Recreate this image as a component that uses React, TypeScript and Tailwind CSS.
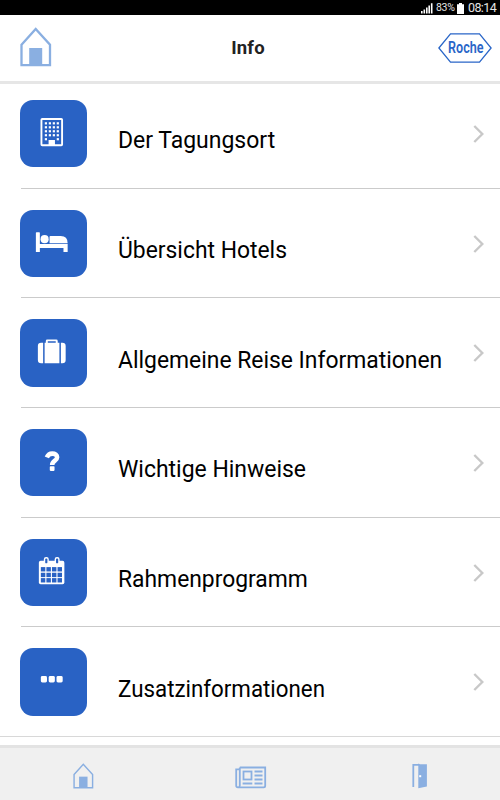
import type { ReactNode } from 'react';

interface MenuItem {
  label: string;
  icon: ReactNode;
  labelClass: string;
}

function BuildingIcon() {
  const columns = [25, 29, 33, 37];
  const rows = [22.4, 26.4, 30.4, 34.4, 38.4];

  return (
    <svg viewBox="0 0 68 68" className="size-full" fill="#fff">
      <rect x="21.6" y="19.2" width="20.8" height="26.4" rx="0.8" fill="none" stroke="#fff" strokeWidth="1.9" />
      {rows.map((y, r) =>
        columns.map((x, c) =>
          r === 4 && (c === 1 || c === 2) ? null : <rect key={`${x}-${y}`} x={x} y={y} width="2.2" height="2.2" />
        )
      )}
      <rect x="28.8" y="40.3" width="6.4" height="5.5" />
    </svg>
  );
}

function BedIcon() {
  return (
    <svg viewBox="0 0 68 68" className="size-full" fill="#fff">
      <path d="M16.7 22.3h2.6a.7.7 0 0 1 .7.7v11.3h28v8h-4.2v-4H20v4h-4V23a.7.7 0 0 1 .7-.7z" />
      <circle cx="24.8" cy="29.4" r="4.1" />
      <path d="M29.8 33.4v-6.5q0-.8.8-.8h10.4q7 0 7 7.3z" />
    </svg>
  );
}

function SuitcaseIcon() {
  return (
    <svg viewBox="0 0 68 68" className="size-full" fill="#fff">
      <path d="M23.3 23.8v20.7h-2a3.3 3.3 0 0 1-3.3-3.3V27.1a3.3 3.3 0 0 1 3.3-3.3z" />
      <path d="M41.2 23.8v20.7h1.5a3.3 3.3 0 0 0 3.3-3.3V27.1a3.3 3.3 0 0 0-3.3-3.3z" />
      <path d="M24.8 23.8H26v-1.7q0-1.5 1.5-1.5h9q1.5 0 1.5 1.5v1.7h1.7v20.7H24.8zM28 23.8h8v-1.4h-8z" />
    </svg>
  );
}

function QuestionIcon() {
  return (
    <svg viewBox="0 0 68 68" className="size-full" fill="none" stroke="#fff" strokeWidth="4.6">
      <path d="M27 28.6q1.7-3.8 5.5-3.8c3 0 4.9 1.5 4.9 3.6 0 3.6-5 3.3-5 7.8" />
      <rect x="30" y="37.6" width="4.8" height="4.6" rx="0.8" fill="#fff" stroke="none" />
    </svg>
  );
}

function CalendarIcon() {
  const columns = [21, 26.6, 32.2, 37.8];
  const rows = [28.3, 34, 39.4];

  return (
    <svg viewBox="0 0 68 68" className="size-full" fill="#fff">
      <rect x="19" y="22" width="25.7" height="23.6" rx="1.8" />
      {rows.map(y => columns.map(x => <rect key={`${x}-${y}`} x={x} y={y} width="4.5" height="4.4" fill="#2962c4" />))}
      <rect x="24.7" y="18.9" width="3.6" height="6.3" rx="1.6" fill="#2962c4" stroke="#fff" strokeWidth="1.4" />
      <rect x="35.6" y="18.9" width="3.6" height="6.3" rx="1.6" fill="#2962c4" stroke="#fff" strokeWidth="1.4" />
    </svg>
  );
}

function DotsIcon() {
  return (
    <svg viewBox="0 0 68 68" className="size-full" fill="#fff">
      <rect x="21" y="28.2" width="6.2" height="6.5" rx="1.5" />
      <rect x="28.9" y="28.2" width="6.2" height="6.5" rx="1.5" />
      <rect x="36.8" y="28.2" width="6.2" height="6.5" rx="1.5" />
    </svg>
  );
}

function HouseIcon({ className, strokeWidth }: { className: string; strokeWidth: number }) {
  return (
    <svg viewBox="0 0 32 40" className={className} fill="none" stroke="#8aafe1" strokeWidth={strokeWidth}>
      <path d="M1.5 17.8 15.7 2 30 17.8V38.2H1.5z" />
      <path d="M9.2 21h13v17h-13z" fill="#8aafe1" stroke="none" />
    </svg>
  );
}

function NewsIcon() {
  return (
    <svg viewBox="0 0 32 23" className="mt-[2px] ml-[3px] h-[23px] w-8" fill="none" stroke="#8aafe1" strokeWidth="1.8">
      <path d="M4.8 1.5h25.4v18.2q0 1.6-1.6 1.6H3q-1.8 0-1.8-1.8V3.3h3.6M4.8 1.5v18q0 1.6-1.6 1.8" />
      <rect x="8.5" y="5.5" width="8" height="8" />
      <path d="M19.5 5.5h8M19.5 9.5h8M19.5 13.5h8M7.6 17.5h9.7M19.5 17.5h8" />
    </svg>
  );
}

function DoorIcon() {
  return (
    <svg viewBox="0 0 16 26" className="ml-[6px] h-[26px] w-4" fill="none" stroke="#8aafe1">
      <path d="M1.3 24V1.8H7" strokeWidth="1.8" />
      <path d="M6.3.5 8 1.2h6.9v22.3L6.3 25.3z" fill="#8aafe1" stroke="none" />
      <rect x="7.2" y="12.2" width="2" height="2" fill="#fff" stroke="none" />
    </svg>
  );
}

const items: MenuItem[] = [
  { label: 'Der Tagungsort', icon: <BuildingIcon />, labelClass: 'scale-x-[0.957]' },
  { label: 'Übersicht Hotels', icon: <BedIcon />, labelClass: 'scale-x-[0.953]' },
  { label: 'Allgemeine Reise Informationen', icon: <SuitcaseIcon />, labelClass: 'scale-x-[0.953]' },
  { label: 'Wichtige Hinweise', icon: <QuestionIcon />, labelClass: 'scale-x-[0.956]' },
  { label: 'Rahmenprogramm', icon: <CalendarIcon />, labelClass: 'scale-x-[0.952]' },
  { label: 'Zusatzinformationen', icon: <DotsIcon />, labelClass: 'scale-x-[0.93]' },
];

function StatusBar() {
  return (
    <div className="flex h-[15px] shrink-0 items-center justify-end bg-black pt-px pr-[5px] text-[#e4e4e4]">
      <svg viewBox="0 0 12 11" className="mr-[3px] h-[11px] w-3" fill="#fff">
        <path d="M0 8h1.6v2.5H0zM2.5 6.5h1.6v4H2.5zM5 4.5h1.6v6H5zM7.4 2.5H9v8H7.4zM9.9.3h1.6v10.2H9.9z" />
      </svg>
      <span className="w-[21px] whitespace-nowrap text-[10.5px] leading-none tracking-[-0.3px]">83%</span>
      <svg viewBox="0 0 7 11" className="mr-[4px] h-[11px] w-[7px]" fill="#fff">
        <path d="M2 0h3v1.3h2V11H0V1.3h2z" />
      </svg>
      <span className="w-[27px] whitespace-nowrap text-[12.5px] leading-none tracking-[-0.6px]">08:14</span>
    </div>
  );
}

function Header() {
  return (
    <header className="flex h-[69px] shrink-0 items-center justify-between border-b-3 border-[#e6e6e6] pr-2 pl-5">
      <HouseIcon className="mb-[3px] h-10 w-8" strokeWidth={2.3} />
      <h1 className="mt-[2px] ml-[6px] text-[18.5px] font-bold tracking-[0.2px] text-[#222]">Info</h1>
      <svg viewBox="0 0 54 30" className="h-[30px] w-[54px] overflow-visible">
        <path d="M.9 15 12.5.8h29L53.1 15 41.5 29.2h-29z" fill="#fff" stroke="#2a66c8" strokeWidth="1.3" />
        <text x="12.9" y="20.5" transform="scale(0.785 1)" fill="#2a66c8" className="text-[16px] font-semibold">
          Roche
        </text>
      </svg>
    </header>
  );
}

function MenuRow({ item, last }: { item: MenuItem; last: boolean }) {
  return (
    <li className={last ? 'border-b border-[#d8d8d8]' : ''}>
      <div className={`ml-[21px] flex items-center pt-1.5 ${last ? 'h-[109px]' : 'h-[109.7px] border-b-[1.5px] border-[#cbcbcb]'}`}>
        <div className="mt-[-5.5px] ml-[-1.4px] flex size-[67.5px] shrink-0 items-center justify-center rounded-[13px] bg-[#2962c4]">
          {item.icon}
        </div>
        <span className={`mt-2 ml-[31px] grow origin-left whitespace-nowrap text-[24px] leading-7 text-black ${item.labelClass}`}>
          {item.label}
        </span>
        <svg viewBox="0 0 11 18" className="mt-[-5px] mr-4 h-[18px] w-[11px] shrink-0" fill="none" stroke="#c8c8c8" strokeWidth="2.4">
          <path d="M1.3 1 9.3 9l-8 8" />
        </svg>
      </div>
    </li>
  );
}

function App() {
  return (
    <div className="flex h-[800px] w-[500px] flex-col overflow-hidden bg-white font-['Roboto',sans-serif]">
      <StatusBar />
      <Header />
      <ul className="-mt-[5px] h-[666px] shrink-0">
        {items.map((item, index) => (
          <MenuRow key={item.label} item={item} last={index === items.length - 1} />
        ))}
      </ul>
      <nav className="grid grow grid-cols-3 items-center justify-items-center border-t-3 border-[#e3e3e3] bg-[#f0f0f0] pt-[4px]">
        <HouseIcon className="h-[26px] w-[21px]" strokeWidth={2.2} />
        <NewsIcon />
        <DoorIcon />
      </nav>
    </div>
  );
}

export default App;
